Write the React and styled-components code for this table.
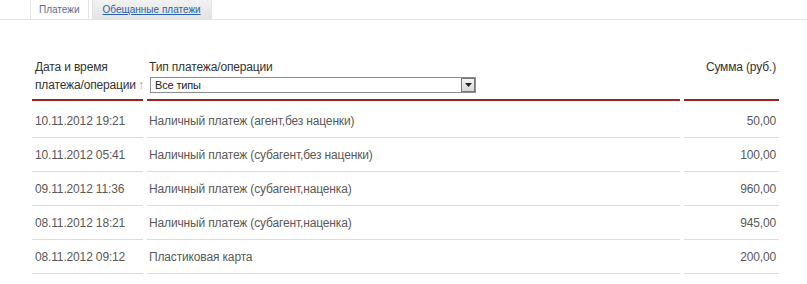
import styled, { createGlobalStyle } from 'styled-components';

const GlobalStyle = createGlobalStyle`
    body {
        margin: 0;
        background: #ffffff;
        font-family: "Liberation Sans", Arial, sans-serif;
    }
`;

const Page = styled.div`
    width: 807px;
    height: 284px;
    overflow: hidden;
`;

const TabBar = styled.div`
    display: flex;
    align-items: flex-end;
    height: 20px;
    padding-left: 30px;
    gap: 3px;
    border-bottom: 1px solid #e2e2e2;
    box-sizing: border-box;
`;

const Tab = styled.div`
    box-sizing: border-box;
    padding: 0 ${p => (p.$active ? '8px' : '10px')};
    display: flex;
    align-items: center;
    font-size: 10px;
    border: 1px solid #e4e4e4;
    border-top: none;
    margin-bottom: ${p => (p.$active ? '-1px' : '0')};
    height: ${p => (p.$active ? '20px' : '19px')};
    background: ${p => (p.$active ? '#ffffff' : 'linear-gradient(#f2f2f2, #e4e4e4)')};
    color: ${p => (p.$active ? '#5a6f8c' : '#2d62a6')};
    text-decoration: ${p => (p.$active ? 'none' : 'underline')};
    cursor: pointer;
`;

const Grid = styled.div`
    display: grid;
    grid-template-columns: 111px 533px 95px;
    column-gap: 4px;
    margin: 38px 0 0 32px;
    width: 747px;
    font-size: 12px;
    letter-spacing: -0.15px;
`;

const HeadCell = styled.div`
    border-bottom: 2px solid #a31d1d;
    padding: 0 ${p => (p.$right ? '3px' : '0')} 5px ${p => (p.$pad || 0)}px;
    color: #333;
    line-height: 18px;
    white-space: nowrap;
    display: flex;
    flex-direction: column;
    align-items: ${p => (p.$right ? 'flex-end' : 'flex-start')};
`;

const Arrow = styled.span`
    color: #999;
    margin-left: 2px;
`;

const Select = styled.div`
    width: 326px;
    height: 16px;
    box-sizing: border-box;
    border: 1px solid #8c8c8c;
    display: flex;
    align-items: center;
    justify-content: space-between;
    font-size: 11px;
    color: #222;
    padding-left: 4px;
    margin-top: 1px;
    margin-left: 1px;
`;

const SelectButton = styled.div`
    width: 14px;
    height: 14px;
    box-sizing: border-box;
    border: 1px solid #777;
    background: linear-gradient(#f4f4f4, #d8d8d8);
    display: flex;
    align-items: center;
    justify-content: center;
`;

const Spacer = styled.div`
    height: 3px;
    grid-column: 1 / -1;
`;

const Cell = styled.div`
    height: 34px;
    box-sizing: border-box;
    border-bottom: 1px solid #dcdcdc;
    display: flex;
    align-items: center;
    justify-content: ${p => (p.$right ? 'flex-end' : 'flex-start')};
    padding: 0 ${p => (p.$right ? '3px' : '0')} 0 ${p => (p.$pad || 0)}px;
    color: #595959;
`;

const rows = [
    ['10.11.2012 19:21', 'Наличный платеж (агент,без наценки)', '50,00'],
    ['10.11.2012 05:41', 'Наличный платеж (субагент,без наценки)', '100,00'],
    ['09.11.2012 11:36', 'Наличный платеж (субагент,наценка)', '960,00'],
    ['08.11.2012 18:21', 'Наличный платеж (субагент,наценка)', '945,00'],
    ['08.11.2012 09:12', 'Пластиковая карта', '200,00'],
];

const App = () => {
    return (
        <Page>
            <GlobalStyle />
            <TabBar>
                <Tab $active>Платежи</Tab>
                <Tab>Обещанные платежи</Tab>
            </TabBar>
            <Grid>
                <HeadCell $pad={3}>
                    <span>Дата и время</span>
                    <span>платежа/операции<Arrow>↑</Arrow></span>
                </HeadCell>
                <HeadCell $pad={2}>
                    <span>Тип платежа/операции</span>
                    <Select>
                        <span>Все типы</span>
                        <SelectButton>
                            <svg width="7" height="4" viewBox="0 0 7 4">
                                <path d="M0 0h7L3.5 4z" fill="#222" />
                            </svg>
                        </SelectButton>
                    </Select>
                </HeadCell>
                <HeadCell $right>
                    <span>Сумма (руб.)</span>
                </HeadCell>
                <Spacer />
                {rows.map((r, i) => (
                    <>
                        <Cell key={'d' + i} $pad={3}>{r[0]}</Cell>
                        <Cell key={'t' + i} $pad={2}>{r[1]}</Cell>
                        <Cell key={'s' + i} $right>{r[2]}</Cell>
                    </>
                ))}
            </Grid>
        </Page>
    );
};

export default App;
